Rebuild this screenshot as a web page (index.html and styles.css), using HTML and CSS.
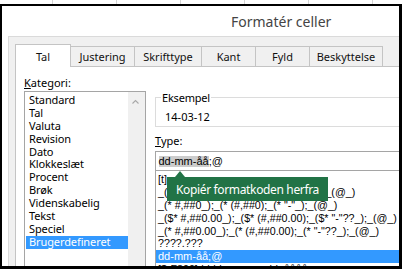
FILE: index.html
```html
<!DOCTYPE html>
<html lang="da">
<head>
<meta charset="utf-8">
<title>Formatér celler</title>
<link rel="stylesheet" href="styles.css">
</head>
<body>
<div class="sheet">
  <span class="cell"></span><span class="cell"></span><span class="cell"></span><span class="cell"></span><span class="cell"></span><span class="cell"></span><span class="cell"></span>
</div>
<div class="frame">
  <div class="titlebar"><h1 class="title">Formatér celler</h1></div>
  <div class="client">
    <div class="tabs">
      <div class="tab tab-tal active">Tal</div>
      <div class="tab tab-just">Justering</div>
      <div class="tab tab-skrift">Skrifttype</div>
      <div class="tab tab-kant">Kant</div>
      <div class="tab tab-fyld">Fyld</div>
      <div class="tab tab-besk">Beskyttelse</div>
    </div>
    <div class="pane">
      <div class="col-left">
        <div class="label"><u>K</u>ategori:</div>
        <div class="listbox">
          <ul class="items">
            <li>Standard</li>
            <li>Tal</li>
            <li>Valuta</li>
            <li>Revision</li>
            <li>Dato</li>
            <li>Klokkeslæt</li>
            <li>Procent</li>
            <li>Brøk</li>
            <li>Videnskabelig</li>
            <li>Tekst</li>
            <li>Speciel</li>
            <li class="selected">Brugerdefineret</li>
          </ul>
          <div class="scrollbar">
            <svg class="chev" width="17" height="16" viewBox="0 0 17 16"><polyline points="4.5,11.5 7.5,8.5 10.5,11.5" fill="none" stroke="#a8a8a8" stroke-width="1.1"/></svg>
          </div>
        </div>
      </div>
      <div class="col-right">
        <fieldset class="group">
          <legend>Eksempel</legend>
          <div class="sample">14-03-12</div>
        </fieldset>
        <div class="label type-label"><u>T</u>ype:</div>
        <div class="input"><span class="sel">dd-mm-åå</span>;@</div>
        <div class="formats">
          <ul class="codes">
            <li>[t]:mm:ss</li>
            <li>_($* #,##0_);_($* (#,##0);_($* "-"_);_(@_)</li>
            <li>_(* #,##0_);_(* (#,##0);_(* "-"_);_(@_)</li>
            <li>_($* #,##0.00_);_($* (#,##0.00);_($* "-"??_);_(@_)</li>
            <li>_(* #,##0.00_);_(* (#,##0.00);_(* "-"??_);_(@_)</li>
            <li>????.???</li>
            <li class="selected">dd-mm-åå;@</li>
            <li>[$-F800]dddd, mmmm dd, åååå</li>
          </ul>
          <div class="tip">Kopiér formatkoden herfra</div>
        </div>
      </div>
    </div>
  </div>
</div>
</body>
</html>
```

FILE: styles.css
```css
* { box-sizing: border-box; }
html, body { margin: 0; padding: 0; }
body {
  width: 402px;
  height: 269px;
  overflow: hidden;
  background: #fff;
  font-family: "Noto Sans", sans-serif;
  color: #000;
}

/* spreadsheet strip behind the dialog */
.sheet { height: 4px; display: flex; background: #fff; }
.cell { flex: none; width: 64px; height: 4px; border-right: 1px solid #d4d4d4; }
.cell:first-child { width: 53px; }

/* black frame around the dialog */
.frame {
  height: 265px;
  border-style: solid;
  border-color: #000;
  border-width: 2px 3px 3px 2px;
  background: #fff;
  display: flex;
  flex-direction: column;
  overflow: hidden;
}

.titlebar { flex: none; height: 30px; padding: 6px 0 0 229px; }
.title {
  margin: 0;
  font-weight: normal;
  font-size: 14px;
  line-height: 19px;
  color: #444;
  white-space: nowrap;
}

.client {
  flex: 1;
  margin: 0 -40px 0 6px;
  border-top: 1px solid #dadada;
  border-left: 1px solid #dadada;
  background: #f0f0f0;
  padding: 7px 0 0 6px;
  display: flex;
  flex-direction: column;
}

.tabs { display: flex; align-items: flex-end; height: 22px; flex: none; }
.tab {
  flex: none;
  height: 20px;
  margin-left: -1px;
  border: 1px solid #c4c4c4;
  border-bottom: none;
  background: #f0f0f0;
  font-size: 11px;
  line-height: 19px;
  text-align: center;
  white-space: nowrap;
  color: #111;
}
.tab.active {
  position: relative;
  z-index: 1;
  margin-left: 0;
  height: 23px;
  margin-bottom: -1px;
  padding-top: 2px;
  background: #fff;
}
.tab-tal { width: 56px; }
.tab-just { width: 65px; }
.tab-skrift { width: 68px; }
.tab-kant { width: 55px; }
.tab-fyld { width: 55px; }
.tab-besk { width: 74px; }

.pane {
  flex: 1;
  border-top: 1px solid #c4c4c4;
  border-left: 1px solid #c4c4c4;
  background: #fff;
  padding: 8px 0 0 8px;
  display: grid;
  grid-template-columns: 122px 1fr;
  column-gap: 9px;
  align-items: start;
}

.label { font-size: 11px; line-height: 15px; white-space: nowrap; }

.listbox {
  margin-top: 1px;
  height: 200px;
  border: 1px solid #a5a5a5;
  display: flex;
}
.items { list-style: none; margin: 0; padding: 2px 0 0 1px; flex: 1; min-width: 0; }
.items li {
  height: 12.9px;
  line-height: 12.9px;
  padding-left: 3px;
  font-size: 11px;
  white-space: nowrap;
  letter-spacing: -0.1px;
}
.items li.selected { background: #3399ff; color: #fff; }
.scrollbar { flex: none; width: 17px; background: #f0f0f0; }
.chev { display: block; }

.col-right { min-width: 0; }
.group {
  margin: 15px 0 0 0;
  padding: 4px 9px 2px;
  border: 1px solid #dcdcdc;
  min-width: 0;
}
.group legend {
  padding: 0 1px;
  margin-left: -4px;
  font-size: 11px;
  line-height: 15px;
  letter-spacing: -0.2px;
}
.sample { font-size: 11px; line-height: 15px; }

.type-label { margin-top: 6px; }

.input {
  margin-top: 3px;
  height: 20px;
  border: 1px solid #a5a5a5;
  padding-left: 2.5px;
  font-family: "Liberation Sans", Arial, sans-serif;
  font-size: 11px;
  line-height: 18px;
  white-space: nowrap;
}
.sel {
  display: inline-block;
  height: 11px;
  line-height: 11px;
  background: #cccccc;
}

.formats {
  position: relative;
  height: 120px;
  border: 1px solid #a5a5a5;
  border-top: none;
}
.codes { list-style: none; margin: 0; padding: 2px 0 0 0; }
.codes li {
  height: 12.9px;
  line-height: 12.9px;
  padding-left: 2px;
  font-family: "Liberation Sans", Arial, sans-serif;
  font-size: 10.7px;
  white-space: nowrap;
}
.codes li.selected { background: #3399ff; color: #fff; font-size: 11px; }

.tip {
  position: absolute;
  left: 11px;
  top: 6px;
  width: 161px;
  height: 24px;
  padding: 1px 0 0 9px;
  background: #217346;
  color: #fff;
  font-size: 12px;
  line-height: 23px;
  letter-spacing: -0.35px;
  white-space: nowrap;
}
.tip::before {
  content: "";
  position: absolute;
  left: 8px;
  top: -6px;
  border-left: 5.5px solid transparent;
  border-right: 5.5px solid transparent;
  border-bottom: 6px solid #217346;
}
```
